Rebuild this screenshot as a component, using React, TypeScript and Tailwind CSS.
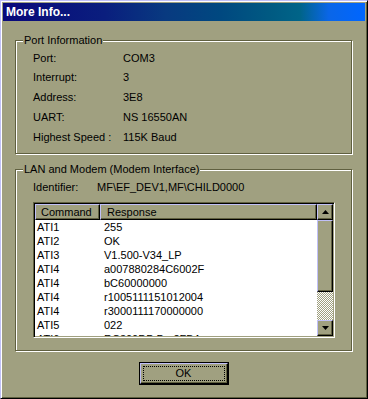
import React from "react";

const rows: [string, string][] = [
  ["ATI1", "255"],
  ["ATI2", "OK"],
  ["ATI3", "V1.500-V34_LP"],
  ["ATI4", "a007880284C6002F"],
  ["ATI4", "bC60000000"],
  ["ATI4", "r1005111151012004"],
  ["ATI4", "r3000111170000000"],
  ["ATI5", "022"],
  ["ATI6", "RC300DP:P - 2FBA"],
];

const info: [string, string][] = [
  ["Port:", "COM3"],
  ["Interrupt:", "3"],
  ["Address:", "3E8"],
  ["UART:", "NS 16550AN"],
  ["Highest Speed :", "115K Baud"],
];

function Arrow({ up }: { up: boolean }) {
  return (
    <svg width="7" height="4" viewBox="0 0 7 4" className="block">
      {up ? <polygon points="3.5,0 7,4 0,4" fill="#000" /> : <polygon points="0,0 7,0 3.5,4" fill="#000" />}
    </svg>
  );
}

const raised =
  "border border-t-[#c0c0f8] border-l-[#c0c0f8] border-r-black border-b-black shadow-[inset_-1px_-1px_0_#606040]";

export default function App() {
  return (
    <div className="w-[368px] h-[399px] bg-[#a0a080] border border-t-[#c0c0f8] border-l-[#c0c0f8] border-r-black border-b-black shadow-[inset_1px_1px_0_#ffffff,inset_-1px_-1px_0_#606040] p-[2px] flex flex-col text-[11px] text-black [font-family:'Liberation_Sans',Arial,sans-serif]">
      {/* Title bar */}
      <div className="h-[18px] shrink-0 flex items-center pl-[3px] bg-[linear-gradient(90deg,#08087a_0%,#0a1e7e_28%,#083a80_45%,#004880_60%,#005a82_74%,#006488_82%,#0a66e8_90%,#0066ff_100%)]">
        <span className="text-white font-bold text-[12px] leading-none">More Info...</span>
      </div>

      <div className="flex flex-col pl-[12px] pt-[19px]">
        {/* Port Information */}
        <div className="relative w-[337px] h-[114px] border border-[#606040] shadow-[inset_1px_1px_0_#ffffff,1px_1px_0_#ffffff] pl-[17px] pt-[7px]">
          <span className="absolute left-[7px] -top-[7px] px-[1px] bg-[#a0a080] leading-[13px]">Port Information</span>
          {info.map(([k, v]) => (
            <div key={k} className="flex items-center h-[19.8px]">
              <span className="w-[90px]">{k}</span>
              <span>{v}</span>
            </div>
          ))}
        </div>

        {/* LAN and Modem */}
        <div className="relative mt-[15px] w-[337px] h-[182px] border border-[#606040] shadow-[inset_1px_1px_0_#ffffff,1px_1px_0_#ffffff] pl-[17px] pt-[10px]">
          <span className="absolute left-[7px] -top-[7px] px-[1px] bg-[#a0a080] leading-[13px]">LAN and Modem (Modem Interface)</span>
          <div className="flex items-center h-[14px]">
            <span className="w-[64px]">Identifier:</span>
            <span>MF\EF_DEV1,MF\CHILD0000</span>
          </div>

          {/* List view */}
          <div className="mt-[8px] w-[302px] h-[136px] border border-t-[#606040] border-l-[#606040] border-r-white border-b-white shadow-[inset_1px_1px_0_#000000,inset_-1px_-1px_0_#a0a080] p-[1px] flex">
            <div className="w-[282px] h-[132px] bg-white overflow-hidden flex flex-col">
              <div className="flex h-[16px] shrink-0 bg-[#a0a080]">
                <div className={`w-[65px] h-[16px] ${raised} flex items-center pl-[5px] leading-none`}>Command</div>
                <div className={`flex-1 h-[16px] ${raised} flex items-center pl-[6px] leading-none`}>Response</div>
              </div>
              {rows.map(([c, r], i) => (
                <div key={i} className="flex h-[14px] shrink-0 items-center leading-none">
                  <span className="w-[69px] pl-[2px]">{c}</span>
                  <span>{r}</span>
                </div>
              ))}
            </div>
            {/* Scrollbar */}
            <div className="w-[16px] h-[132px] flex flex-col">
              <div className={`h-[16px] shrink-0 bg-[#a0a080] ${raised} flex items-center justify-center`}>
                <Arrow up />
              </div>
              <div className={`h-[72px] shrink-0 bg-[#a0a080] ${raised}`} />
              <div className="flex-1 [background-image:repeating-conic-gradient(#ffffff_0_25%,#a0a080_0_50%)] [background-size:2px_2px]" />
              <div className={`h-[16px] shrink-0 bg-[#a0a080] ${raised} flex items-center justify-center`}>
                <Arrow up={false} />
              </div>
            </div>
          </div>
        </div>

        {/* OK button */}
        <div className="mt-[11px] w-[337px] flex justify-center">
          <div className="w-[90px] h-[23px] border border-black p-0">
            <div className={`w-full h-full ${raised} flex items-center justify-center p-[2px]`}>
              <div className="w-full h-full border border-dotted border-black flex items-center justify-center leading-none">
                OK
              </div>
            </div>
          </div>
        </div>
      </div>
    </div>
  );
}
